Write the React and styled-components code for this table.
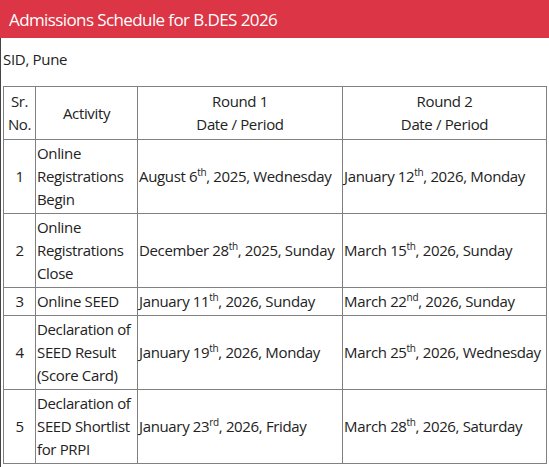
import React from "react";
import styled, { createGlobalStyle } from "styled-components";

const GlobalStyle = createGlobalStyle`
  html, body {
    margin: 0;
    padding: 0;
    background: #fff;
  }
  body {
    font-family: "Open Sans", "Noto Sans", sans-serif;
    color: #222;
  }
`;

const Page = styled.div`
  width: 549px;
  height: 467px;
  overflow: hidden;
  display: flex;
  flex-direction: column;
`;

const TitleBar = styled.div`
  flex-shrink: 0;
  height: 38px;
  background: #dc3545;
  color: #fff;
  display: flex;
  align-items: center;
  padding-left: 9px;
  font-size: 17px;
  letter-spacing: -0.6px;
`;

const Body = styled.div`
  flex: 1;
  border-left: 1px solid #444;
  padding-left: 2px;
`;

const Place = styled.p`
  margin: 10px 0 16px 0;
  font-size: 15px;
  line-height: 22px;
  letter-spacing: -0.3px;
`;

const Table = styled.table`
  border-collapse: collapse;
  table-layout: fixed;
  width: 543px;
  font-size: 15px;
  line-height: 23px;
  letter-spacing: -0.35px;
`;

const Cell = styled.td`
  border: 1px solid #808080;
  padding: 2px 1px;
  vertical-align: middle;
  text-align: ${(p) => (p.$center ? "center" : "left")};
  white-space: ${(p) => (p.$nowrap ? "nowrap" : "normal")};
`;

const Head = styled(Cell).attrs({ as: "th" })`
  font-weight: normal;
  text-align: center;
  padding: 3px 1px;
`;

const Sup = styled.sup`
  font-size: 10px;
  line-height: 0;
  vertical-align: 6px;
`;

const rows = [
  ["1", "Online Registrations Begin", ["August 6", "th", ", 2025, Wednesday"], ["January 12", "th", ", 2026, Monday"]],
  ["2", "Online Registrations Close", ["December 28", "th", ", 2025, Sunday"], ["March 15", "th", ", 2026, Sunday"]],
  ["3", "Online SEED", ["January 11", "th", ", 2026, Sunday"], ["March 22", "nd", ", 2026, Sunday"]],
  ["4", "Declaration of SEED Result (Score Card)", ["January 19", "th", ", 2026, Monday"], ["March 25", "th", ", 2026, Wednesday"]],
  ["5", "Declaration of SEED Shortlist for PRPI", ["January 23", "rd", ", 2026, Friday"], ["March 28", "th", ", 2026, Saturday"]],
];

const DateText = ({ parts }) => (
  <>
    {parts[0]}
    <Sup>{parts[1]}</Sup>
    {parts[2]}
  </>
);

export default function App() {
  return (
    <Page>
      <GlobalStyle />
      <TitleBar>Admissions Schedule for B.DES 2026</TitleBar>
      <Body>
        <Place>SID, Pune</Place>
        <Table>
          <colgroup>
            <col style={{ width: 32 }} />
            <col style={{ width: 102 }} />
            <col style={{ width: 205 }} />
            <col style={{ width: 204 }} />
          </colgroup>
          <thead>
            <tr>
              <Head>
                Sr.
                <br />
                No.
              </Head>
              <Head>Activity</Head>
              <Head>
                Round 1
                <br />
                Date / Period
              </Head>
              <Head>
                Round 2
                <br />
                Date / Period
              </Head>
            </tr>
          </thead>
          <tbody>
            {rows.map((r) => (
              <tr key={r[0]}>
                <Cell $center>{r[0]}</Cell>
                <Cell>{r[1]}</Cell>
                <Cell $nowrap>
                  <DateText parts={r[2]} />
                </Cell>
                <Cell $nowrap>
                  <DateText parts={r[3]} />
                </Cell>
              </tr>
            ))}
          </tbody>
        </Table>
      </Body>
    </Page>
  );
}
